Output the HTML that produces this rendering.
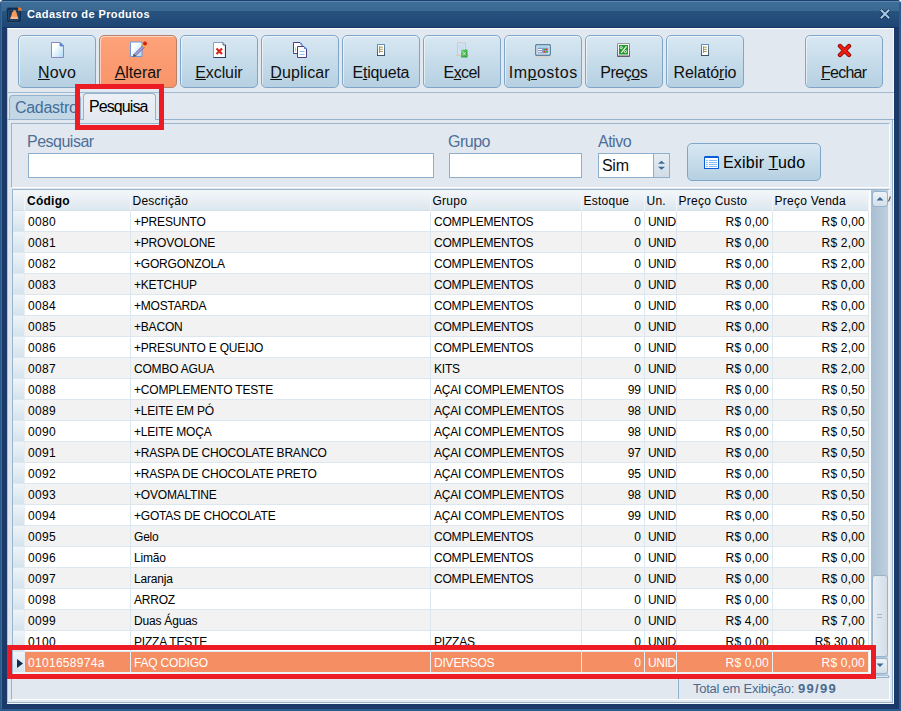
<!DOCTYPE html>
<html><head><meta charset="utf-8">
<style>
*{box-sizing:border-box;margin:0;padding:0}
html,body{width:901px;height:711px;overflow:hidden;background:#fff;font-family:"Liberation Sans",sans-serif}
.a{position:absolute}
#win{left:0;top:0;width:901px;height:711px;background:#1b3a69;border-bottom:2px solid #2b5a8c;border-radius:4px 4px 0 0;overflow:hidden}
#edgeL{left:0;top:3px;width:2px;height:708px;background:linear-gradient(90deg,#2a5a8a 50%,#3a6a9a 50%);z-index:2}
#edgeR{right:0;top:3px;width:2px;height:708px;background:#2b5a8c;z-index:2}
#title{left:0;top:0;width:901px;height:28px;background:linear-gradient(#1c4070 0,#1c4070 1px,#5889ae 1px,#5889ae 2px,#3f6f99 2px,#3a6891 11px,#27537f 11px,#1f4574 27px,#143765 27px,#143765 28px);border-radius:4px 4px 0 0}
#ttext{left:27px;top:8px;font-size:11px;font-weight:bold;color:#fff;letter-spacing:0.4px}
#content{left:7px;top:28px;width:887px;height:676px;background:#e2e8f0;border-left:1px solid #a6c6e0;border-top:1px solid #fff;border-right:1px solid #f4f8fc}
.btn{position:absolute;top:35px;height:53px;width:78px;border:1px solid #7fa6c8;border-radius:5px;background:linear-gradient(#d9e8f2,#c6dcea 50%,#b6d0e2);box-shadow:inset 1px 1px 0 rgba(255,255,255,0.55)}
.btn .lb{position:absolute;left:0;right:0;top:28px;text-align:center;font-size:16px;color:#111;white-space:nowrap}
.btn.on{background:linear-gradient(#fda27a,#f8946a);border-color:#b88068}
u{text-decoration:underline;text-decoration-thickness:1px;text-underline-offset:1px}
#tbsep{left:7px;top:92px;width:887px;height:1px;background:#9fbad2}
.tab{position:absolute;border:1px solid #95b3cc;border-bottom:none;border-radius:4px 4px 0 0}
#tab1{left:9px;top:95px;width:72px;height:24px;background:#c3d7e5}
#tab2{left:83px;top:93px;width:73px;height:27px;background:linear-gradient(#edf1f6,#e3e9f1)}
.tabt{position:absolute;font-size:16px;white-space:nowrap;letter-spacing:-0.3px}
#tpline{left:7px;top:119px;width:887px;height:1px;background:#95b3cc}
#panel{left:11px;top:123px;width:879px;height:65px;border:1px solid #9ab6ce;border-bottom:1px solid #fff;border-right:1px solid #fff;background:#e2e8f0}
.lbl{position:absolute;font-size:16px;color:#4d6f98;white-space:nowrap;letter-spacing:-0.5px}
.inp{position:absolute;top:153px;height:25px;background:#fff;border:1px solid #8fb0cc}
#grid{left:12px;top:189px;width:877px;height:511px;border:1px solid #9ab6ce;background:#e2e8f0;overflow:hidden}
#hdr{left:13px;top:190px;width:856px;height:21px;background:linear-gradient(#f4f7fa,#dde7ef);border-bottom:1px solid #d3e0ea}
.hc{position:absolute;top:194px;font-size:12px;color:#000;white-space:nowrap;letter-spacing:0.25px}
.hs{position:absolute;top:190px;width:1px;height:21px;background:#f3f6f9}
.r{position:absolute;left:13px;width:856px;border-right:1px solid #dfe7ee;height:21px;background:#fff;font-size:12px;color:#000;white-space:nowrap;border-bottom:1px solid #dde7ef}
.r.alt{background:#f2f2f2}
.r span{position:absolute;top:4px}
.r .ind{position:absolute;left:0;top:0;width:12px;height:20px;background:linear-gradient(#eff4f8,#d4e3ed);border-right:1px solid #e8eef3}
.c0{left:15px;letter-spacing:0.3px}.c1{left:121px;letter-spacing:-0.2px}.c2{left:421px;letter-spacing:-0.2px}.c3{right:227px;text-align:right}.c4{left:635px;letter-spacing:-0.35px}.c5{right:99px;letter-spacing:0.2px}.c6{right:3px;letter-spacing:0.2px}
.vl{position:absolute;top:211px;width:1px;height:441px;background:#dde7ef}
#sel{left:13px;top:652px;width:856px;border-right:1px solid #f0f0f0;height:20px;background:#f68e64;font-size:12px;color:#fff;white-space:nowrap}
#sel span{position:absolute;top:4px}
#sel .ind{position:absolute;left:0;top:0;width:12px;height:20px;background:linear-gradient(#eff4f8,#d4e3ed);border-right:1px solid #e8eef3}
#sel span.c0{left:15px}
#red1{left:75px;top:84px;width:89px;height:46px;border:5px solid #ed1c24}
#red2{left:7px;top:645px;width:869px;height:34px;border:5px solid #ed1c24}
#sb{left:871px;top:190px;width:17px;height:485px;background:linear-gradient(90deg,#a9bed2,#bdd0de)}
#foot{left:11px;top:677px;width:879px;height:23px;border-top:1px solid #93b2cc;border-left:1px solid #93b2cc;border-right:1px solid #fff;border-bottom:1px solid #fff;background:#e2e8f0}
</style></head><body>
<div id="win" class="a">
  <div id="edgeL" class="a"></div><div id="edgeR" class="a"></div>
  <div id="title" class="a"></div>
  <div id="ttext" class="a">Cadastro de Produtos</div>
  <svg class="a" style="left:6px;top:7px" width="17" height="17" viewBox="0 0 17 17"><rect x="0.5" y="0.5" width="15" height="15" rx="2.5" fill="#0f2c4e" stroke="#2c5272" stroke-width="1"/><rect x="2.5" y="3" width="10.5" height="10.5" rx="1.5" fill="#18395e" stroke="#2a5078" stroke-width="0.8"/><rect x="7" y="3.2" width="3" height="1.8" rx="0.8" fill="#f49a58"/><path d="M6.2 5H10.4L12.2 12H4.4Z" fill="#f59a5c"/><path d="M4.9 9.8H11.7L12.2 12H4.4Z" fill="#fcb88a"/><path d="M12.2 0.2H14L15.8 2V3.8H12.2Z" fill="#f37a28"/></svg>
  <svg class="a" style="left:879px;top:8px" width="12" height="12" viewBox="0 0 12 12"><path d="M2.5 2.5L9.5 9.5M9.5 2.5L2.5 9.5" stroke="#0e2440" stroke-width="3.4" stroke-linecap="round"/><path d="M2.5 2.5L9.5 9.5M9.5 2.5L2.5 9.5" stroke="#a6cae6" stroke-width="2" stroke-linecap="square"/></svg>
  <div id="content" class="a"></div>
</div>
<div class="btn" style="left:18px"><div class="lb" style="letter-spacing:0.2px;text-indent:0.2px"><u>N</u>ovo</div></div>
<div class="btn on" style="left:99px"><div class="lb" style="letter-spacing:-0.1px;text-indent:-0.1px"><u>A</u>lterar</div></div>
<div class="btn" style="left:180px"><div class="lb" style="letter-spacing:-0.1px;text-indent:-0.1px"><u>E</u>xcluir</div></div>
<div class="btn" style="left:261px"><div class="lb" style="letter-spacing:0.1px;text-indent:0.1px"><u>D</u>uplicar</div></div>
<div class="btn" style="left:342px"><div class="lb" style="letter-spacing:-0.24px;text-indent:-0.24px">E<u>t</u>iqueta</div></div>
<div class="btn" style="left:423px"><div class="lb" style="letter-spacing:-0.58px;text-indent:-0.58px">E<u>x</u>cel</div></div>
<div class="btn" style="left:504px"><div class="lb" style="letter-spacing:0.5px;text-indent:0.5px">Im<u>p</u>ostos</div></div>
<div class="btn" style="left:585px"><div class="lb" style="letter-spacing:-0.5px;text-indent:-0.5px">Preç<u>o</u>s</div></div>
<div class="btn" style="left:666px"><div class="lb" style="letter-spacing:-0.15px;text-indent:-0.15px">Relató<u>r</u>io</div></div>
<div class="btn" style="left:805px"><div class="lb" style="letter-spacing:-0.74px;text-indent:-0.74px"><u>F</u>echar</div></div>

<svg class="a" style="left:51px;top:42px" width="13" height="16" viewBox="0 0 13 16"><defs><linearGradient id="gpg" x1="0" y1="0" x2="1" y2="1"><stop offset="0.3" stop-color="#fff"/><stop offset="1" stop-color="#a8dcf4"/></linearGradient></defs><path d="M0.5 0.5H9L12.5 4V15.5H0.5Z" fill="url(#gpg)" stroke="#8c86c2"/><path d="M9 0.5V4H12.5Z" fill="#3f8fe6" stroke="#6a78c8" stroke-width="0.8"/></svg>
<svg class="a" style="left:130px;top:41px" width="17" height="16" viewBox="0 0 17 16"><defs><linearGradient id="gpg2" x1="0" y1="0" x2="1" y2="1"><stop offset="0.35" stop-color="#fff"/><stop offset="1" stop-color="#9fd6f2"/></linearGradient></defs><path d="M0.5 1H12V15.5H0.5Z" fill="url(#gpg2)" stroke="#6f98e0"/><path d="M4 13.5L12.5 5L14 6.5L5.5 15Z" fill="#a9a6e8" stroke="#5b55a8" stroke-width="0.9"/><path d="M3.2 15.3L4 13.5L5.5 15Z" fill="#b88a18" stroke="#3a2a10" stroke-width="0.6"/><path d="M12 4.5L13.5 3L15.5 5L14 6.5Z" fill="#f2c010"/><circle cx="15" cy="2.6" r="2" fill="#d81c10"/></svg>
<svg class="a" style="left:213px;top:42px" width="13" height="16" viewBox="0 0 13 16"><path d="M0.5 0.5H10L12.5 3V15.5H0.5Z" fill="#fff" stroke="#8aa0c0"/><path d="M12.5 3V15.5H0.5" fill="none" stroke="#2c3c64" stroke-width="1.2"/><path d="M10 0.5V3H12.5" fill="#e8f0f8" stroke="#2c3c64" stroke-width="0.8"/><path d="M3.5 6.5L9 12M9 6.5L3.5 12" stroke="#d42818" stroke-width="2.2"/></svg>
<svg class="a" style="left:293px;top:42px" width="14" height="16" viewBox="0 0 14 16"><path d="M0.5 0.5H7L9 2.5V11.5H0.5Z" fill="#fff" stroke="#4c3e86"/><path d="M7 0.5V2.5H9Z" fill="#3f8fe6"/><path d="M4.5 4.5H11L13.5 7V15.5H4.5Z" fill="#fff" stroke="#4c3e86"/><path d="M11 4.5V7H13.5Z" fill="#3f8fe6"/><path d="M6.5 9.5H11.5M6.5 12.5H11.5" stroke="#8cc4f4" stroke-width="1.2"/><path d="M2.5 5.5V9.5" stroke="#a0ccf4" stroke-width="1"/></svg>
<svg class="a" style="left:377px;top:44px" width="8" height="12" viewBox="0 0 8 12"><defs><linearGradient id="get" x1="0" y1="0" x2="0" y2="1"><stop offset="0" stop-color="#6896b8"/><stop offset="1" stop-color="#3c5064"/></linearGradient></defs><rect x="0" y="0" width="8" height="12" fill="url(#get)"/><rect x="1" y="1" width="6" height="10" fill="#fff"/><path d="M2.5 2.2V9M2.5 3.2H5.8M2.5 5.3H5.8M2.5 7.5H5.8" stroke="#a89848" stroke-width="1"/></svg>
<svg class="a" style="left:456px;top:42px" width="14" height="16" viewBox="0 0 14 16"><defs><linearGradient id="gxl" x1="0" y1="0" x2="1" y2="1"><stop offset="0" stop-color="#8ee08e"/><stop offset="0.5" stop-color="#3cb44a"/><stop offset="1" stop-color="#2a9a3a"/></linearGradient></defs><path d="M1.5 0.5H4.5L5 1H9.5V13H1.5Z" fill="#d2e4f4" stroke="#d4c2ba" stroke-width="0.9"/><path d="M3 4H8M3 6H8M3 8H8" stroke="#bcd6ee" stroke-width="0.8"/><path d="M0 13.5H13" stroke="#dcc8bc" stroke-width="1.1"/><rect x="5" y="7.5" width="6.5" height="8" rx="0.5" fill="url(#gxl)"/><path d="M6.8 10L9.8 13.5M9.8 10L6.8 13.5" stroke="#d8f4d8" stroke-width="0.9"/></svg>
<svg class="a" style="left:535px;top:44px" width="16" height="14" viewBox="0 0 16 14"><rect x="0.7" y="0.7" width="14.6" height="10.6" rx="1" fill="#fff" stroke="#5a86a6" stroke-width="1.4"/><rect x="2.5" y="2.5" width="11" height="7" fill="#8a9ac8"/><path d="M3 3.5H13" stroke="#8ad8f4" stroke-width="1"/><path d="M3 5.5H7M3 7.7H7" stroke="#fff" stroke-width="1"/><circle cx="9.5" cy="5.5" r="0.8" fill="#10c020"/><circle cx="11.5" cy="5.5" r="0.8" fill="#f02020"/><circle cx="9.5" cy="7.7" r="0.8" fill="#f02020"/><circle cx="11.5" cy="7.7" r="0.8" fill="#10c020"/><rect x="1" y="12" width="14" height="1.6" fill="#d8d4cc"/></svg>
<svg class="a" style="left:617px;top:43px" width="13" height="14" viewBox="0 0 13 14"><defs><linearGradient id="gpr" x1="0" y1="0" x2="0" y2="1"><stop offset="0" stop-color="#9a9aa0"/><stop offset="1" stop-color="#5a5a60"/></linearGradient></defs><rect x="0" y="0" width="13" height="14" rx="1" fill="url(#gpr)"/><rect x="1" y="1" width="11" height="11.5" fill="#f4f4f4"/><rect x="2" y="2" width="9" height="9.5" fill="#1e9a28"/><circle cx="4.3" cy="4.6" r="1.1" fill="none" stroke="#fff" stroke-width="0.9"/><circle cx="8.5" cy="8.6" r="1.1" fill="none" stroke="#fff" stroke-width="0.9"/><path d="M9.5 3.3L4.2 10" stroke="#fff" stroke-width="1.2"/></svg>
<svg class="a" style="left:701px;top:44px" width="8" height="12" viewBox="0 0 8 12"><rect x="0" y="0" width="8" height="12" fill="url(#get)"/><rect x="1" y="1" width="6" height="10" fill="#fff"/><path d="M2.5 2.2V9M2.5 3.2H5.8M2.5 5.3H5.8M2.5 7.5H5.8" stroke="#a89848" stroke-width="1"/></svg>
<svg class="a" style="left:837px;top:43px" width="15" height="15" viewBox="0 0 15 15"><path d="M3 3L12 12M12 3L3 12" stroke="#8a0a06" stroke-width="4.4" stroke-linecap="round"/><path d="M3 3L12 12M12 3L3 12" stroke="#f01c10" stroke-width="2.6" stroke-linecap="round"/></svg>
<div id="tbsep" class="a"></div>
<div id="tpline" class="a"></div>
<div id="tab1" class="tab"><div class="tabt" style="left:5px;top:3px;color:#436d9a">Cadastro</div></div>
<div id="tab2" class="tab"><div class="tabt" style="left:5px;top:4px;color:#000;letter-spacing:-0.9px">Pesquisa</div></div>
<div id="panel" class="a"></div>
<div class="lbl" style="left:27px;top:133px">Pesquisar</div>
<div class="lbl" style="left:448px;top:133px">Grupo</div>
<div class="lbl" style="left:598px;top:133px">Ativo</div>
<div class="inp" style="left:28px;width:406px"></div>
<div class="inp" style="left:449px;width:133px"></div>
<div class="inp" style="left:598px;width:72px"></div>
<div class="a" style="left:653px;top:154px;width:16px;height:23px;border-left:1px solid #8fb0cc;background:linear-gradient(#e6edf3,#d0dce7)"></div>
<svg class="a" style="left:657px;top:160px" width="9" height="11" viewBox="0 0 9 11"><path d="M1 3.8L4.5 0.8L8 3.8Z" fill="#3b6896"/><path d="M1 6.8L4.5 9.8L8 6.8Z" fill="#3b6896"/></svg>
<div class="a" style="left:602px;top:157px;font-size:16px;color:#111;letter-spacing:-0.3px">Sim</div>
<div class="a" style="left:687px;top:143px;width:134px;height:38px;border:1px solid #7fa6c8;border-radius:5px;background:linear-gradient(#d9e8f2,#c6dcea 50%,#b6d0e2)"></div>
<svg class="a" style="left:704px;top:156px" width="15" height="13" viewBox="0 0 15 13"><path d="M1 0H14L15 1V13H0V1Z" fill="#0b5cd6"/><rect x="1" y="2" width="13" height="10" fill="#fff"/><path d="M2 4.5H4M5 4.5H13M2 6.5H4M5 6.5H13M2 8.5H4M5 8.5H13M2 10.5H4M5 10.5H13" stroke="#82bdf8" stroke-width="1"/></svg>
<div class="a" style="left:723px;top:154px;font-size:16px;color:#000;letter-spacing:0.2px;white-space:nowrap">Exibir <u>T</u>udo</div>
<div id="grid" class="a"></div>
<div id="hdr" class="a"></div>
<div class="hs" style="left:24px"></div><div class="hs" style="left:130px"></div><div class="hs" style="left:430px"></div><div class="hs" style="left:581px"></div><div class="hs" style="left:644px"></div><div class="hs" style="left:676px"></div><div class="hs" style="left:772px"></div><div class="hs" style="left:868px"></div>
<div class="hc" style="left:27px;font-weight:bold">Código</div>
<div class="hc" style="left:132.5px">Descrição</div>
<div class="hc" style="left:432.5px">Grupo</div>
<div class="hc" style="left:583.5px">Estoque</div>
<div class="hc" style="left:646.5px">Un.</div>
<div class="hc" style="left:678.5px">Preço Custo</div>
<div class="hc" style="left:774.5px">Preço Venda</div>
<div class="r" style="top:211px"><i class="ind"></i><span class="c0">0080</span><span class="c1">+PRESUNTO</span><span class="c2">COMPLEMENTOS</span><span class="c3">0</span><span class="c4">UNID</span><span class="c5">R$ 0,00</span><span class="c6">R$ 0,00</span></div>
<div class="r alt" style="top:232px"><i class="ind"></i><span class="c0">0081</span><span class="c1">+PROVOLONE</span><span class="c2">COMPLEMENTOS</span><span class="c3">0</span><span class="c4">UNID</span><span class="c5">R$ 0,00</span><span class="c6">R$ 2,00</span></div>
<div class="r" style="top:253px"><i class="ind"></i><span class="c0">0082</span><span class="c1">+GORGONZOLA</span><span class="c2">COMPLEMENTOS</span><span class="c3">0</span><span class="c4">UNID</span><span class="c5">R$ 0,00</span><span class="c6">R$ 2,00</span></div>
<div class="r alt" style="top:274px"><i class="ind"></i><span class="c0">0083</span><span class="c1">+KETCHUP</span><span class="c2">COMPLEMENTOS</span><span class="c3">0</span><span class="c4">UNID</span><span class="c5">R$ 0,00</span><span class="c6">R$ 0,00</span></div>
<div class="r" style="top:295px"><i class="ind"></i><span class="c0">0084</span><span class="c1">+MOSTARDA</span><span class="c2">COMPLEMENTOS</span><span class="c3">0</span><span class="c4">UNID</span><span class="c5">R$ 0,00</span><span class="c6">R$ 0,00</span></div>
<div class="r alt" style="top:316px"><i class="ind"></i><span class="c0">0085</span><span class="c1">+BACON</span><span class="c2">COMPLEMENTOS</span><span class="c3">0</span><span class="c4">UNID</span><span class="c5">R$ 0,00</span><span class="c6">R$ 2,00</span></div>
<div class="r" style="top:337px"><i class="ind"></i><span class="c0">0086</span><span class="c1">+PRESUNTO E QUEIJO</span><span class="c2">COMPLEMENTOS</span><span class="c3">0</span><span class="c4">UNID</span><span class="c5">R$ 0,00</span><span class="c6">R$ 2,00</span></div>
<div class="r alt" style="top:358px"><i class="ind"></i><span class="c0">0087</span><span class="c1">COMBO AGUA</span><span class="c2">KITS</span><span class="c3">0</span><span class="c4">UNID</span><span class="c5">R$ 0,00</span><span class="c6">R$ 2,00</span></div>
<div class="r" style="top:379px"><i class="ind"></i><span class="c0">0088</span><span class="c1">+COMPLEMENTO TESTE</span><span class="c2">AÇAI COMPLEMENTOS</span><span class="c3">99</span><span class="c4">UNID</span><span class="c5">R$ 0,00</span><span class="c6">R$ 0,50</span></div>
<div class="r alt" style="top:400px"><i class="ind"></i><span class="c0">0089</span><span class="c1">+LEITE EM PÓ</span><span class="c2">AÇAI COMPLEMENTOS</span><span class="c3">98</span><span class="c4">UNID</span><span class="c5">R$ 0,00</span><span class="c6">R$ 0,50</span></div>
<div class="r" style="top:421px"><i class="ind"></i><span class="c0">0090</span><span class="c1">+LEITE MOÇA</span><span class="c2">AÇAI COMPLEMENTOS</span><span class="c3">98</span><span class="c4">UNID</span><span class="c5">R$ 0,00</span><span class="c6">R$ 0,50</span></div>
<div class="r alt" style="top:442px"><i class="ind"></i><span class="c0">0091</span><span class="c1">+RASPA DE CHOCOLATE BRANCO</span><span class="c2">AÇAI COMPLEMENTOS</span><span class="c3">97</span><span class="c4">UNID</span><span class="c5">R$ 0,00</span><span class="c6">R$ 0,50</span></div>
<div class="r" style="top:463px"><i class="ind"></i><span class="c0">0092</span><span class="c1">+RASPA DE CHOCOLATE PRETO</span><span class="c2">AÇAI COMPLEMENTOS</span><span class="c3">95</span><span class="c4">UNID</span><span class="c5">R$ 0,00</span><span class="c6">R$ 0,50</span></div>
<div class="r alt" style="top:484px"><i class="ind"></i><span class="c0">0093</span><span class="c1">+OVOMALTINE</span><span class="c2">AÇAI COMPLEMENTOS</span><span class="c3">98</span><span class="c4">UNID</span><span class="c5">R$ 0,00</span><span class="c6">R$ 0,50</span></div>
<div class="r" style="top:505px"><i class="ind"></i><span class="c0">0094</span><span class="c1">+GOTAS DE CHOCOLATE</span><span class="c2">AÇAI COMPLEMENTOS</span><span class="c3">99</span><span class="c4">UNID</span><span class="c5">R$ 0,00</span><span class="c6">R$ 0,50</span></div>
<div class="r alt" style="top:526px"><i class="ind"></i><span class="c0">0095</span><span class="c1">Gelo</span><span class="c2">COMPLEMENTOS</span><span class="c3">0</span><span class="c4">UNID</span><span class="c5">R$ 0,00</span><span class="c6">R$ 0,00</span></div>
<div class="r" style="top:547px"><i class="ind"></i><span class="c0">0096</span><span class="c1">Limão</span><span class="c2">COMPLEMENTOS</span><span class="c3">0</span><span class="c4">UNID</span><span class="c5">R$ 0,00</span><span class="c6">R$ 0,00</span></div>
<div class="r alt" style="top:568px"><i class="ind"></i><span class="c0">0097</span><span class="c1">Laranja</span><span class="c2">COMPLEMENTOS</span><span class="c3">0</span><span class="c4">UNID</span><span class="c5">R$ 0,00</span><span class="c6">R$ 0,00</span></div>
<div class="r" style="top:589px"><i class="ind"></i><span class="c0">0098</span><span class="c1">ARROZ</span><span class="c2"></span><span class="c3">0</span><span class="c4">UNID</span><span class="c5">R$ 0,00</span><span class="c6">R$ 0,00</span></div>
<div class="r alt" style="top:610px"><i class="ind"></i><span class="c0">0099</span><span class="c1">Duas Águas</span><span class="c2"></span><span class="c3">0</span><span class="c4">UNID</span><span class="c5">R$ 4,00</span><span class="c6">R$ 7,00</span></div>
<div class="r" style="top:631px"><i class="ind"></i><span class="c0">0100</span><span class="c1">PIZZA TESTE</span><span class="c2">PIZZAS</span><span class="c3">0</span><span class="c4">UNID</span><span class="c5">R$ 0,00</span><span class="c6">R$ 30,00</span></div>
<div class="vl" style="left:130px"></div>
<div class="vl" style="left:430px"></div>
<div class="vl" style="left:581px"></div>
<div class="vl" style="left:644px"></div>
<div class="vl" style="left:676px"></div>
<div class="vl" style="left:772px"></div>
<div id="sel" class="a"><i class="ind"></i><svg class="a" style="left:4px;top:7px" width="6" height="9" viewBox="0 0 6 9"><path d="M0 0L6 4.5L0 9Z" fill="#122a4c"/></svg><span class="c0">0101658974a</span><span class="c1">FAQ CODIGO</span><span class="c2">DIVERSOS</span><span class="c3">0</span><span class="c4">UNID</span><span class="c5">R$ 0,00</span><span class="c6">R$ 0,00</span></div>
<div class="a" style="left:130px;top:652px;width:1px;height:20px;background:#e6eef4"></div><div class="a" style="left:430px;top:652px;width:1px;height:20px;background:#e6eef4"></div><div class="a" style="left:581px;top:652px;width:1px;height:20px;background:#e6eef4"></div><div class="a" style="left:644px;top:652px;width:1px;height:20px;background:#e6eef4"></div><div class="a" style="left:676px;top:652px;width:1px;height:20px;background:#e6eef4"></div><div class="a" style="left:772px;top:652px;width:1px;height:20px;background:#e6eef4"></div>
<div class="a" style="left:13px;top:672px;width:856px;height:3px;background:#edf3f7"></div>
<div id="sb" class="a"></div>
<div class="a" style="left:869px;top:190px;width:2px;height:485px;background:#fbfcfd"></div>
<div class="a" style="left:888px;top:190px;width:2px;height:485px;background:#f1efef"></div><div class="a" style="left:13px;top:675px;width:876px;height:1px;background:#a9c4dc"></div><div class="a" style="left:7px;top:702px;width:886px;height:1px;background:#93b2cc"></div><div class="a" style="left:7px;top:703px;width:887px;height:1px;background:#f4f8fc"></div><div class="a" style="left:892px;top:119px;width:1px;height:583px;background:#93b2cc"></div>
<div class="a" style="left:872px;top:191px;width:16px;height:16px;border:1px solid #98b4cc;border-radius:3px;background:linear-gradient(#eef3f7,#d3dfe9)"></div>
<svg class="a" style="left:876px;top:196px" width="8" height="5" viewBox="0 0 8 5"><path d="M0.5 4.5L4 1L7.5 4.5Z" fill="#3b6896"/></svg>
<div class="a" style="left:872px;top:575px;width:16px;height:82px;border:1px solid #98b4cc;border-radius:3px;background:linear-gradient(90deg,#e7edf3,#d3dee8)"></div>
<div class="a" style="left:877px;top:614px;width:5px;height:1px;background:#9fb8cc"></div>
<div class="a" style="left:877px;top:617px;width:5px;height:1px;background:#9fb8cc"></div>
<div class="a" style="left:872px;top:658px;width:16px;height:16px;border:1px solid #98b4cc;border-radius:3px;background:linear-gradient(#eef3f7,#d3dfe9)"></div>
<svg class="a" style="left:876px;top:663px" width="8" height="5" viewBox="0 0 8 5"><path d="M0.5 0.5L4 4L7.5 0.5Z" fill="#3b6896"/></svg>

<div id="foot" class="a"></div>
<div class="a" style="left:678px;top:678px;width:1px;height:21px;background:#93b2cc"></div>
<div class="a" style="left:693px;top:681px;font-size:13px;color:#4a6a8c;white-space:nowrap;letter-spacing:-0.25px">Total em Exibição:</div><div class="a" style="left:798px;top:681px;font-size:13px;font-weight:bold;color:#4a6a8c;white-space:nowrap;letter-spacing:1.3px">99/99</div>
<svg class="a" style="left:888px;top:196px" width="3" height="6" viewBox="0 0 3 6"><path d="M2.5 0.5L0.5 5.5" stroke="#555" stroke-width="1.2"/></svg>
<div id="red1" class="a"></div>
<div id="red2" class="a"></div>
</body></html>
